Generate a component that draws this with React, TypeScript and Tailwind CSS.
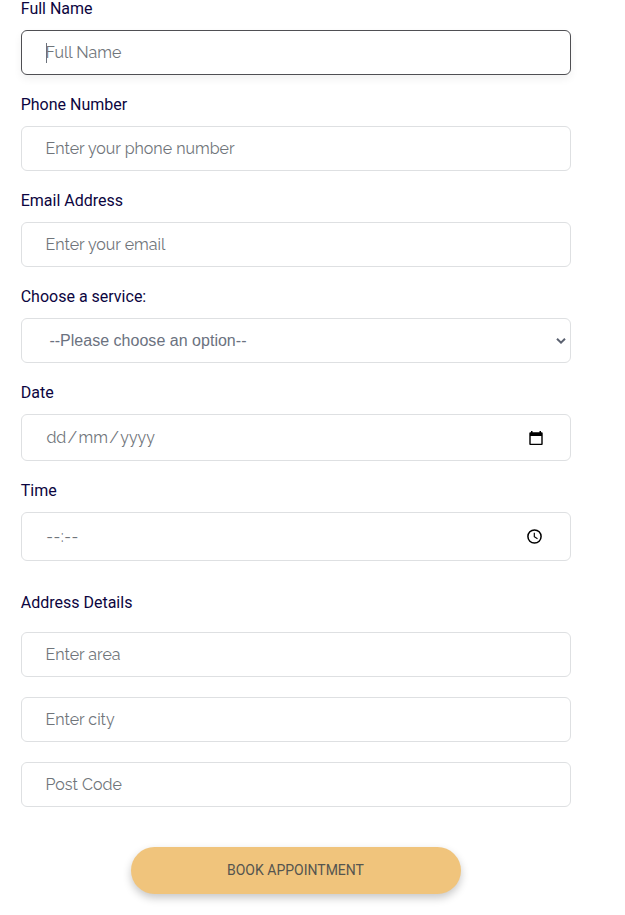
import type { ReactNode } from "react";

const ph = "font-['Raleway','Lato',sans-serif] font-normal text-[16px] leading-6 whitespace-pre text-[#70757a]";

function Label({ children, className = "" }: { children: ReactNode; className?: string }) {
  return (
    <div className={`-ml-[0.3px] text-[16px] text-[#0c0540] font-['Roboto',sans-serif] ${className}`}>
      {children}
    </div>
  );
}

function Box({ children, className = "h-[45px] border-[#dee0e2]" }: { children: ReactNode; className?: string }) {
  return (
    <div className={`flex w-[550px] items-center rounded-[6px] border bg-white pl-6 ${className}`}>
      {children}
    </div>
  );
}

export default function App() {
  return (
    <main className="h-[915px] w-full overflow-hidden bg-white">
      <form className="ml-[21px] flex w-[550px] flex-col">
        <Label className="h-5 leading-[18px]">Full Name</Label>
        <Box className="mt-2.5 h-[45px] border-[#4f4f53] shadow-[0_4px_8px_rgba(0,0,0,0.06)]">
          <span className="-mr-px h-5 w-px bg-[#6b717b]" />
          <span className={`${ph} -ml-[0.5px]`}>Full Name</span>
        </Box>

        <Label className="mt-[17px] h-6 leading-[26px]">Phone Number</Label>
        <Box className="mt-2.5 h-[45px] border-[#dee0e2]">
          <span className={`${ph} -ml-[0.5px]`}>Enter your phone number</span>
        </Box>

        <Label className="mt-[17px] h-6 leading-[26px]">Email Address</Label>
        <Box className="mt-2.5 h-[45px] border-[#dee0e2]">
          <span className={`${ph} -ml-[0.5px]`}>Enter your email</span>
        </Box>

        <Label className="mt-[17px] h-6 leading-[26px]">Choose a service:</Label>
        <Box className="mt-2.5 h-[45px] justify-between border-[#dee0e2]">
          <span className="ml-[3.4px] font-['Liberation_Sans',Arial,sans-serif] text-[16px] leading-6 tracking-[0.02px] text-[#6b7280]">
            --Please choose an option--
          </span>
          <svg className="mr-1 h-[6px] w-[10px]" viewBox="0 0 10 6" fill="none" stroke="#5b6170" strokeWidth="2">
            <path d="M1 0.8 5 4.6 9 0.8" />
          </svg>
        </Box>

        <Label className="mt-[17px] h-6 leading-[26px]">Date</Label>
        <Box className="mt-2.5 h-[47px] justify-between border-[#dee0e2]">
          <span className={`${ph} ml-[0.4px]`}>
            dd<span className="mx-[1.3px]">/</span>mm<span className="mx-[1.3px]">/</span>yyyy
          </span>
          <svg className="mr-[27px] h-[14px] w-[14px]" viewBox="0 0 14 14" fill="#000">
            <path fillRule="evenodd" d="M2 0h1.5v1.3h7V0H12v1.3h.7q1 0 1 1v10.9q0 .8-1 .8H1.3q-1 0-1-.8V2.3q0-1 1-1H2ZM1.7 5v7.7h10.6V5Z" />
          </svg>
        </Box>

        <Label className="mt-[17px] h-6 leading-[26px]">Time</Label>
        <Box className="mt-2.5 h-[49px] justify-between border-[#dee0e2]">
          <span className={`${ph} ml-[0.2px] tracking-[0.5px]`}>--:--</span>
          <svg className="mr-7 h-[15px] w-[15px]" viewBox="0 0 15 15" fill="none" stroke="#000">
            <circle cx="7.5" cy="7.5" r="6.6" strokeWidth="1.5" />
            <path d="M7.3 3.7v4.1l3.2 2" strokeWidth="1.15" />
          </svg>
        </Box>

        <Label className="mt-[29px] h-6 leading-[26px]">Address Details</Label>
        <div className="mt-[18px] flex flex-col gap-5">
          <Box>
            <span className={`${ph} -ml-[0.5px]`}>Enter area</span>
          </Box>
          <Box>
            <span className={`${ph} -ml-[0.5px]`}>Enter city</span>
          </Box>
          <Box>
            <span className={`${ph} -ml-[0.5px]`}>Post Code</span>
          </Box>
        </div>

        <button
          type="button"
          className="mt-10 ml-[110px] flex h-[47px] w-[330px] items-center justify-center rounded-full bg-[#f0c47c] pr-px pb-px font-['Roboto',sans-serif] text-[14px] leading-5 text-[#55554f] shadow-[0_4px_8px_rgba(0,0,0,0.22)]"
        >
          BOOK APPOINTMENT
        </button>
      </form>
    </main>
  );
}
